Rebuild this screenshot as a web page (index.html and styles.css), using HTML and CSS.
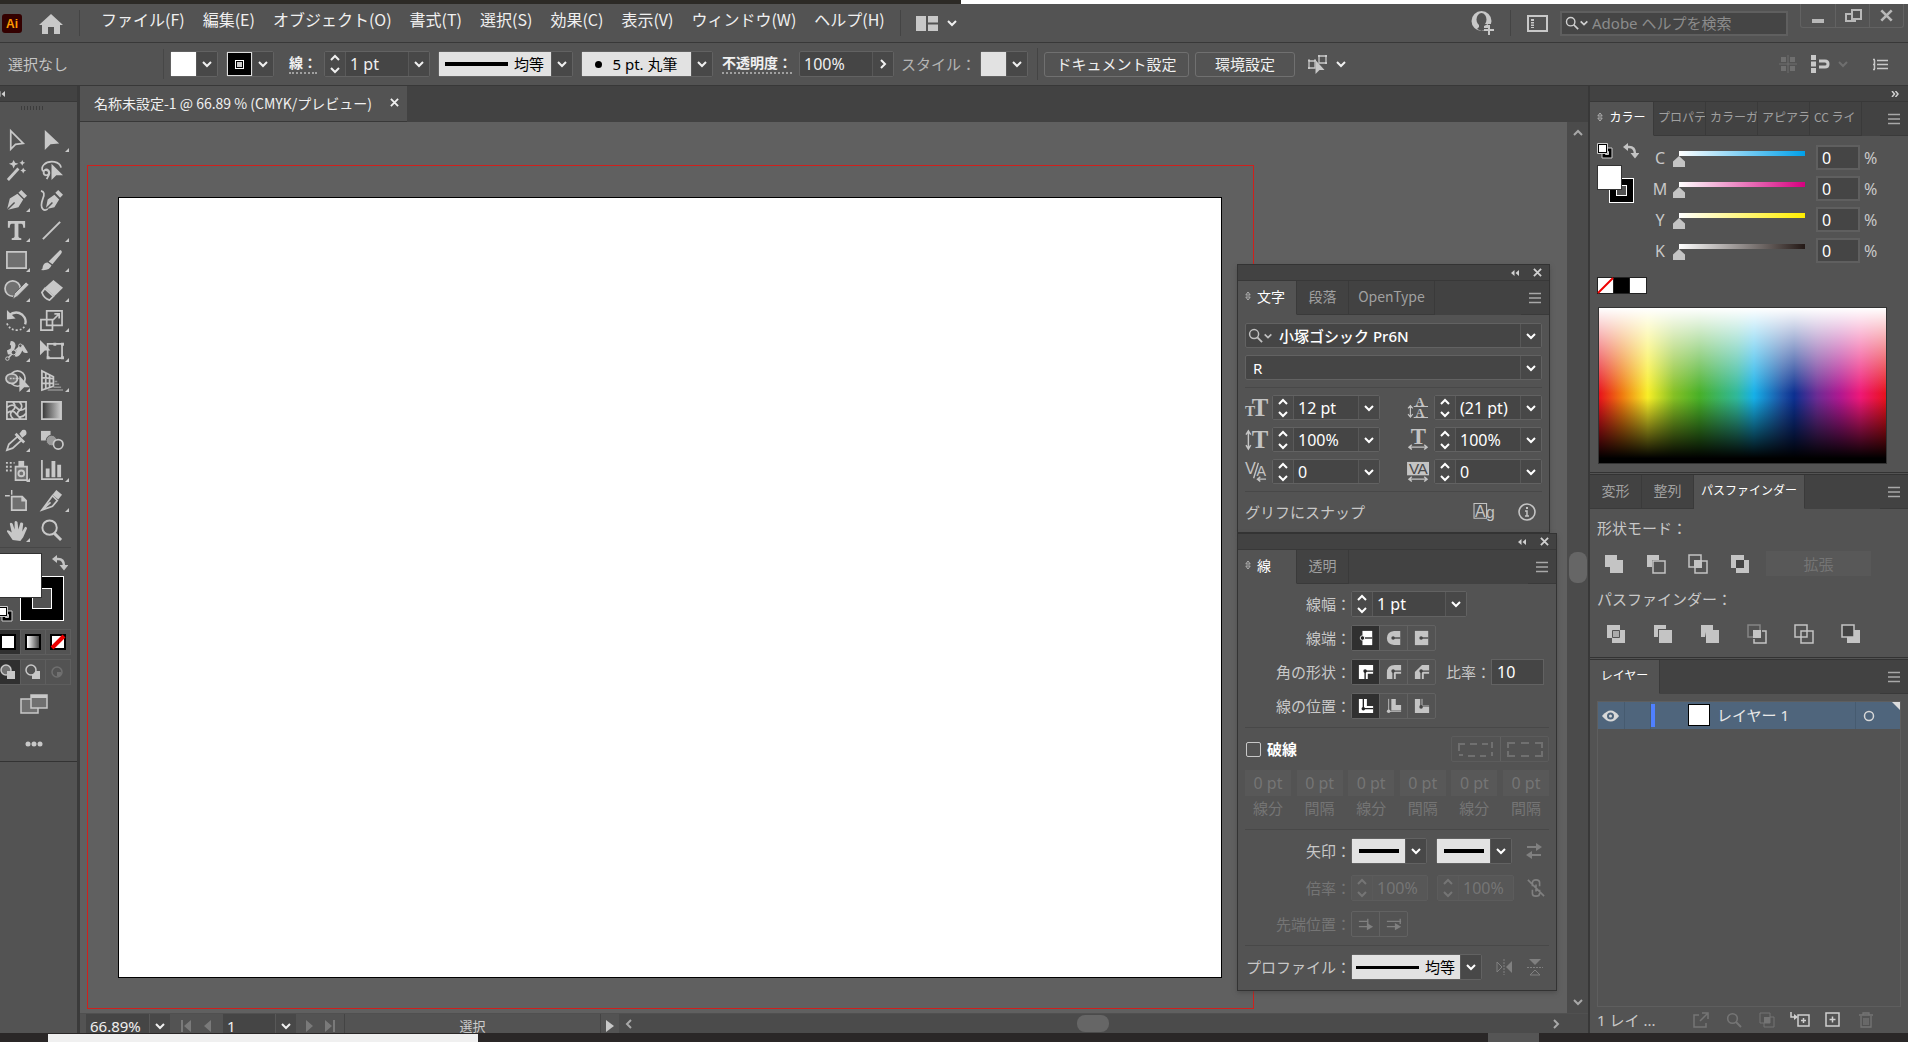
FILE: index.html
```html
<!DOCTYPE html>
<html lang="ja">
<head>
<meta charset="utf-8">
<title>名称未設定-1</title>
<link rel="stylesheet" href="styles.css">
</head>
<body>
<svg class="defs" aria-hidden="true">
  <symbol id="down" viewBox="0 0 12 12"><path d="M2 4l4 4 4-4" fill="none" stroke="currentColor" stroke-width="2"/></symbol>
  <symbol id="right" viewBox="0 0 12 12"><path d="M4 2l4 4-4 4" fill="none" stroke="currentColor" stroke-width="2"/></symbol>
  <symbol id="left" viewBox="0 0 12 12"><path d="M8 2L4 6l4 4" fill="none" stroke="currentColor" stroke-width="2"/></symbol>
  <symbol id="up" viewBox="0 0 12 12"><path d="M2 8l4-4 4 4" fill="none" stroke="currentColor" stroke-width="2"/></symbol>
  <symbol id="step" viewBox="0 0 12 20"><path d="M2 6l4-4 4 4M2 14l4 4 4-4" fill="none" stroke="currentColor" stroke-width="2"/></symbol>
  <symbol id="menu" viewBox="0 0 12 12"><path d="M0 1.5h12M0 6h12M0 10.5h12" stroke="currentColor" stroke-width="1.4"/></symbol>
  <symbol id="updown" viewBox="0 0 6 10"><path d="M.8 4L3 1l2.200 3zM.8 6L3 9l2.200-3z" fill="none" stroke="currentColor"/></symbol>
  <symbol id="x" viewBox="0 0 10 10"><path d="M1 1l8 8M9 1L1 9" stroke="currentColor" stroke-width="2"/></symbol>
  <symbol id="dblleft" viewBox="0 0 8 6"><path d="M3.500 0v6L0 3zM8 0v6L4.500 3z" fill="currentColor"/></symbol>
  <symbol id="dblright" viewBox="0 0 8 6"><path d="M1 0l2.500 3L1 6M4.500 0L7 3 4.500 6" fill="none" stroke="currentColor" stroke-width="1.500"/></symbol>
  <symbol id="swap" viewBox="0 0 16 16"><path d="M4 4h2q6 0 6 7" fill="none" stroke="currentColor" stroke-width="2.500"/><path d="M0 4l5-4v8zM7.500 10h9L12 15.500z" fill="currentColor"/></symbol>
  <symbol id="default" viewBox="0 0 16 16"><path d="M5 5h10v10H5z" fill="#000" stroke="#ccc"/><path d="M8.500 8.500h3v3h-3z" fill="#535353" stroke="#ccc"/><path d="M.5 .5h10v10H.5z" fill="#000" stroke="#ccc"/><path d="M2 2h7v7H2z" fill="#fff"/></symbol>
  <symbol id="search" viewBox="0 0 16 16"><circle cx="6.500" cy="6.500" r="4.800" fill="none" stroke="currentColor" stroke-width="1.600"/><path d="M10 10l5 5" stroke="currentColor" stroke-width="2"/></symbol>
</svg>

<div class="desktop-top"><span class="dark"></span><span class="white"></span></div>

<header class="menubar">
  <svg class="logo" viewBox="0 0 20 19"><rect width="20" height="19" rx="3" fill="#330000"/><text x="10" y="14" text-anchor="middle">Ai</text></svg>
  <button class="home" aria-label="ホーム"><svg width="24" height="20" viewBox="0 0 24 20"><path d="M12 0l12 11h-3v9h-6v-7H9v7H3v-9H0z" fill="#c8c8c8"/></svg></button>
  <i class="vsep"></i>
  <nav class="menus">
    <button>ファイル(F)</button><button>編集(E)</button><button>オブジェクト(O)</button><button>書式(T)</button><button>選択(S)</button><button>効果(C)</button><button>表示(V)</button><button>ウィンドウ(W)</button><button>ヘルプ(H)</button>
  </nav>
  <i class="vsep"></i>
  <button class="workspace" aria-label="ワークスペース"><svg width="22" height="15" viewBox="0 0 22 15" fill="#c8c8c8"><path d="M0 0h10v15H0zM12 0h10v6.500H12zM12 8.500h10V15H12z"/></svg><svg width="12" height="12"><use href="#down"/></svg></button>
  <span class="grow"></span>
  <button aria-label="アカウント"><svg width="24" height="26" viewBox="0 0 24 26"><circle cx="10.500" cy="11" r="10" fill="#c8c8c8"/><ellipse cx="10.500" cy="9.500" rx="5" ry="6.500" fill="#535353"/><path d="M8 13h5v4l2 2-4.500 2L6 19l2-2z" fill="#535353"/><path d="M13 14h11v12H13z" fill="#535353"/><path d="M13 16l4-2v4h-4z" fill="#c8c8c8"/><path d="M18 15v10M13 20h10" stroke="#c8c8c8" stroke-width="2"/></svg></button>
  <i class="vsep tight"></i>
  <button aria-label="パネル"><svg width="21" height="17" viewBox="0 0 21 17"><path d="M1 1h19v15H1z" fill="none" stroke="#c8c8c8" stroke-width="2"/><path d="M4 4h3v9H4z" fill="#c8c8c8"/><path d="M4 6.500h3M4 9h3M4 11.500h3" stroke="#535353"/></svg></button>
  <label class="help"><svg width="14" height="14"><use href="#search"/></svg><svg width="10" height="10"><use href="#down"/></svg><input type="text" placeholder="Adobe ヘルプを検索" aria-label="Adobe ヘルプを検索"></label>
  <div class="winbtns">
    <button aria-label="最小化"><svg width="16" height="18"><path d="M2 12h12v4H2z" fill="#b8b8b8"/></svg></button>
    <button aria-label="元に戻す"><svg width="18" height="18" fill="none" stroke="#b8b8b8" stroke-width="2"><path d="M8 3h9v9H8zM8 7H2v7h9v-2"/></svg></button>
    <button aria-label="閉じる"><svg width="13" height="13"><use href="#x"/></svg></button>
  </div>
</header>

<div class="control">
  <span class="state">選択なし</span>
  <div class="combo"><span class="chip white"></span><button class="caret" aria-label="塗り"><svg><use href="#down"/></svg></button></div>
  <div class="combo"><span class="chip strokechip"><i></i></span><button class="caret" aria-label="線のカラー"><svg><use href="#down"/></svg></button></div>
  <label class="dotted" for="sw">線：</label>
  <div class="combo"><button class="stepper" aria-label="増減"><svg><use href="#step"/></svg></button><input id="sw" class="w62" value="1 pt"><button class="caret" aria-label="線幅"><svg><use href="#down"/></svg></button></div>
  <div class="combo"><span class="light w112"><i class="rule w63"></i><select aria-label="可変線幅プロファイル"><option>均等</option></select></span><span class="caret"><svg><use href="#down"/></svg></span></div>
  <div class="combo brush"><span class="light w109"><i class="dot"></i><select aria-label="ブラシ定義"><option>5 pt. 丸筆</option></select></span><span class="caret"><svg><use href="#down"/></svg></span></div>
  <label class="dotted" for="op">不透明度：</label>
  <div class="combo"><input id="op" class="w72" value="100%"><button class="caret" aria-label="不透明度"><svg><use href="#right"/></svg></button></div>
  <span class="style-label">スタイル：</span>
  <div class="combo"><span class="chip"></span><button class="caret" aria-label="スタイル"><svg><use href="#down"/></svg></button></div>
  <i class="vsep"></i>
  <button class="outlined doc">ドキュメント設定</button>
  <button class="outlined pref">環境設定</button>
  <button class="similar" aria-label="類似オブジェクトを選択"><svg width="22" height="22" viewBox="0 0 22 22"><path d="M2 8h6v7H2zM12 3h7v7h-7z" fill="none" stroke="#c8c8c8" stroke-width="1.300"/><path d="M1 6.500h2v2H1zM7 6.500h2v2H7zM1 14h2v2H1zM11 2h2v2h-2zM18 2h2v2h-2zM18 9h2v2h-2z" fill="#c8c8c8"/><path d="M8.500 7v14l4-4h5z" fill="#c8c8c8"/></svg><svg width="12" height="12"><use href="#down"/></svg></button>
  <span class="grow"></span>
  <button class="faint" aria-label="グリッド"><svg width="18" height="18"><path d="M2 2h5v5H2zM11 2h5v5h-5zM2 11h5v5H2zM11 11h5v5h-5z" fill="currentColor"/><path d="M9 0v18M0 9h18" stroke="currentColor"/></svg></button>
  <button class="snap" aria-label="スナップ"><svg width="20" height="20"><path d="M0 1h5v5H0zM0 7.500h5v5H0zM0 14h5v5H0z" fill="#c8c8c8"/><path d="M8 7h6q3 0 3 3t-3 3H8" fill="none" stroke="#c8c8c8" stroke-width="3"/></svg><svg class="faint" width="12" height="12"><use href="#down"/></svg></button>
  <button aria-label="コントロールメニュー"><svg width="15" height="13"><path d="M0 1.500h2M0 6.500h2M0 11.500h2M4 2.500h11M4 6.500h11M4 10.500h11M1.500 2v9" stroke="#c8c8c8" stroke-width="1.500"/></svg></button>
</div>

<main class="work">
  <aside class="toolbox">
    <div class="bar"><svg width="8" height="6"><use href="#dblleft"/></svg></div>
    <div class="grip"></div>
    <div class="tools">
      <button aria-label="選択"><svg viewBox="0 0 24 24"><path d="M6 2v19l5-5 8-1z" class="ln"/></svg></button>
      <button class="more" aria-label="ダイレクト選択"><svg viewBox="0 0 24 24"><path d="M5 1v21l6-6 9-1z"/></svg></button>
      <button aria-label="自動選択"><svg viewBox="0 0 24 24"><path d="M3 22L14 10" stroke="#c8c8c8" stroke-width="3"/><path d="M9 1l1.500 3L14 5l-3.500 1.500L9 10 7.500 6.500 4 5l3.500-1zM18 1l1 2 2 1-2 1-1 2-1-2-2-1 2-1zM19 9l1 2 2 1-2 1-1 2-1-2-2-1 2-1z"/></svg></button>
      <button aria-label="なげなわ"><svg viewBox="0 0 24 24"><path d="M3 13Q1 9 4 6q4-4 11-3 6 1 7 6M3 13q3-3 6 0 1 4-3 4-3-1-2-4 2-4 5-1 2 3-1 7l-1 2" class="ln"/><path d="M12 5v17l5-5h7z"/></svg></button>
      <button class="more" aria-label="ペン"><svg viewBox="0 0 24 24"><path d="M2 22l3-12 8-5 6 6-5 8zM14 4l3-3 6 6-3 3z"/><path d="M2 22l8-8" stroke="#535353" stroke-width="1.500"/></svg></button>
      <button aria-label="曲線"><svg viewBox="0 0 24 24"><path d="M6 21l2-10 7-5 5 5-5 8zM16 4l3-3 5 5-3 3z"/><path d="M6 21l7-7" stroke="#535353" stroke-width="1.500"/><path d="M1 2q5 1 2 8-3 8 0 11 2 2 5 0" class="ln"/></svg></button>
      <button class="more" aria-label="文字"><svg viewBox="0 0 24 24"><path d="M3 2h18v7h-2q0-4-2-4h-3v13q0 2 3 2v2H7v-2q3 0 3-2V5H7Q5 5 5 9H3z"/></svg></button>
      <button class="more" aria-label="直線"><svg viewBox="0 0 24 24"><path d="M3 21L21 3" stroke="#c8c8c8" stroke-width="2"/></svg></button>
      <button class="more" aria-label="長方形"><svg viewBox="0 0 24 24"><path d="M2 3h20v17H2z" fill="#707070" stroke="#c8c8c8" stroke-width="1.800"/></svg></button>
      <button class="more" aria-label="ブラシ"><svg viewBox="0 0 24 24"><path d="M21 1q3 1 1 4l-9 11-4-3zM8 14l4 3q-2 6-11 5 2-1 2-4 1-4 5-4z"/></svg></button>
      <button class="more" aria-label="Shaper"><svg viewBox="0 0 24 24"><circle cx="8" cy="10" r="8" fill="#707070" stroke="#c8c8c8" stroke-width="1.800"/><path d="M22 3l3 3-12 12-5 3 2-6z" stroke="#535353" stroke-width=".8"/></svg></button>
      <button class="more" aria-label="消しゴム"><svg viewBox="0 0 24 24"><path d="M14 1l10 8-9 9-10-9z"/><path d="M5 10l9 8-4 4q-6-2-8-8z" class="ln"/></svg></button>
      <button class="more" aria-label="回転"><svg viewBox="0 0 24 24"><path d="M4 7q7-6 14-1 5 5 3 10" fill="none" stroke="#c8c8c8" stroke-width="2.500"/><path d="M2 1v10l9-1z"/><path d="M2 15q3 7 10 7t9-5" class="ln" stroke-dasharray="2 2"/></svg></button>
      <button class="more" aria-label="拡大・縮小"><svg viewBox="0 0 24 24"><path d="M7 2h16v15H7zM1 11h12v11H1zM13 12l6-6M15 5h5v5" class="ln"/></svg></button>
      <button class="more" aria-label="線幅"><svg viewBox="0 0 24 24"><path d="M6 2q5 0 5 5l-2 6q-2 4-6 3l-1-4 4-2q1-4-1-4zM12 12q3-7 7-6l5 8q-4 2-6-2-3 8-8 6z"/><path d="M2 21L16 7" stroke="#c8c8c8" stroke-width="1.500"/><circle cx="2.500" cy="20.500" r="1.800" fill="#535353" stroke="#c8c8c8"/><circle cx="9" cy="14" r="2.500" fill="#535353" stroke="#c8c8c8"/><circle cx="16" cy="7" r="1.800" fill="#535353" stroke="#c8c8c8"/></svg></button>
      <button class="more" aria-label="自由変形"><svg viewBox="0 0 24 24"><path d="M8 5h15v15H8z" class="ln"/><path d="M0 1v16l5-5h6z"/><path d="M14 4h3v3h-3zM22 4h3v3h-3zM22 18h3v3h-3zM7 18h3v3H7z"/></svg></button>
      <button class="more" aria-label="シェイプ形成"><svg viewBox="0 0 24 24"><circle cx="13" cy="10" r="8" class="ln"/><ellipse cx="7" cy="10" rx="6" ry="5" fill="#707070" stroke="#c8c8c8" stroke-width="1.800"/><path d="M5 10h10" stroke="#c8c8c8" stroke-width="1.500" stroke-dasharray="2 1"/><path d="M15 7v17l5-5h6z"/></svg></button>
      <button class="more" aria-label="遠近グリッド"><svg viewBox="0 0 24 24"><path d="M2 2v20l12-4V8zM6 4v16M10 6v13M2 9l12 1M2 15h12" class="ln"/><path d="M15 13h3M15 16h5M14 19h8M8 22h16" stroke="#909090" stroke-width="1.500"/></svg></button>
      <button aria-label="メッシュ"><svg viewBox="0 0 24 24"><path d="M2 3h20v18H2zM2 9q6-5 10 0t10 0M2 15q6-5 10 1t10-1M8 3q5 5 0 9t1 9M15 3q5 5 0 9t2 9" class="ln"/></svg></button>
      <button aria-label="グラデーション"><svg viewBox="0 0 24 24"><defs><linearGradient id="g1"><stop stop-color="#333"/><stop offset="1" stop-color="#ccc"/></linearGradient></defs><path d="M2 3h20v18H2z" fill="url(#g1)" stroke="#c8c8c8" stroke-width="1.800"/></svg></button>
      <button class="more" aria-label="スポイト"><svg viewBox="0 0 24 24"><path d="M13 8l4 4-9 8-6 2 2-6z" class="ln"/><path d="M12 4l9 9-2 2-9-9zM15 5l3-4q3-1 4 1t0 4l-4 3z"/></svg></button>
      <button aria-label="ブレンド"><svg viewBox="0 0 24 24"><path d="M1 2h10v10H1z"/><circle cx="12" cy="12" r="5.500" fill="#999" stroke="#535353"/><circle cx="19" cy="16" r="5" fill="#535353" stroke="#c8c8c8" stroke-width="1.800"/></svg></button>
      <button class="more" aria-label="シンボルスプレー"><svg viewBox="0 0 24 24"><path d="M11 8h12v14H11z" fill="#707070" stroke="#c8c8c8" stroke-width="1.800"/><path d="M14 2h6v6h-6z"/><circle cx="17" cy="15" r="3" fill="none" stroke="#c8c8c8" stroke-width="2"/><path d="M1 4h9M1 8h8M1 12h6" stroke="#c8c8c8" stroke-width="2" stroke-dasharray="2 2"/></svg></button>
      <button class="more" aria-label="グラフ"><svg viewBox="0 0 24 24"><path d="M2 1v20h22" class="ln"/><path d="M6 10h4v9H6zM12 2h4v17h-4zM18 6h4v13h-4z"/></svg></button>
      <button aria-label="アートボード"><svg viewBox="0 0 24 24"><path d="M7 8h11l4 4v10H7z" fill="#707070" stroke="#c8c8c8" stroke-width="1.800"/><path d="M17 7v6h6" fill="#c8c8c8"/><path d="M7 1v5M0 7h5" stroke="#c8c8c8" stroke-width="1.500"/></svg></button>
      <button class="more" aria-label="スライス"><svg viewBox="0 0 24 24"><path d="M2 22L13 7l5 5-5 6zM2 22l9-8" class="ln"/><path d="M13 6l4-5 6 5-4 5z"/></svg></button>
      <button class="more" aria-label="手のひら"><svg viewBox="0 0 24 24"><path d="M8 22L2 13q0-3 5 1L5 5q1-2 3 0l2 6V3q1-2 3 0l1 8 2-7q2-1 3 1l-1 8 3-5q2 0 2 2l-4 9-3 4z"/></svg></button>
      <button aria-label="ズーム"><svg viewBox="0 0 24 24"><circle cx="10" cy="9" r="7.500" fill="none" stroke="#c8c8c8" stroke-width="2"/><path d="M15 15l7 7" stroke="#c8c8c8" stroke-width="3"/></svg></button>
    </div>
    <div class="fillstroke">
      <span class="stroke"></span><span class="fill"></span>
      <svg class="swapicon" width="16" height="16"><use href="#swap"/></svg>
      <svg class="defaulticon" width="16" height="16"><use href="#default"/></svg>
    </div>
    <div class="modes">
      <button class="on" aria-label="カラー"><span class="msw solid"></span></button>
      <button aria-label="グラデーション"><span class="msw grad"></span></button>
      <button aria-label="なし"><svg width="16" height="16"><path d="M0 0h16v16H0z"/><path d="M2 2h12v12H2z" fill="#fff"/><path d="M2 14L14 2" stroke="#e00" stroke-width="4"/></svg></button>
    </div>
    <div class="modes">
      <button class="on" aria-label="標準描画"><svg width="16" height="16"><circle cx="6" cy="6" r="5" fill="#707070" stroke="#c8c8c8" stroke-width="1.500"/><path d="M7 7h8v8H7z" fill="#c8c8c8"/></svg></button>
      <button aria-label="背面描画"><svg width="16" height="16"><path d="M7 7h8v8H7z" fill="#c8c8c8"/><circle cx="6" cy="6" r="5" fill="#535353" stroke="#c8c8c8" stroke-width="1.500"/></svg></button>
      <button aria-label="内側描画"><svg width="16" height="16"><circle cx="7" cy="8" r="5" fill="none" stroke="#707070" stroke-width="1.500"/><path d="M7 8h4v4H7z" fill="#707070"/></svg></button>
    </div>
    <button class="screen" aria-label="スクリーンモード"><svg width="28" height="20"><path d="M1 5h17v14H1z" fill="#707070" stroke="#c8c8c8" stroke-width="1.500"/><path d="M11 1h16v13H11z" fill="#707070" stroke="#c8c8c8" stroke-width="1.500"/><path d="M11 1h16v3H11z" fill="#c8c8c8"/></svg></button>
    <button class="dots" aria-label="ツールバーを編集"><svg width="18" height="6" fill="#c8c8c8"><circle cx="3" cy="3" r="2.500"/><circle cx="9" cy="3" r="2.500"/><circle cx="15" cy="3" r="2.500"/></svg></button>
  </aside>

  <section class="document">
    <div class="doctabs"><div class="doctab"><span>名称未設定-1 @ 66.89 % (CMYK/プレビュー)</span><button aria-label="閉じる"><svg width="9" height="9"><use href="#x"/></svg></button></div></div>
    <div class="stage">
      <div class="canvas">
        <div class="bleed"></div>
        <div class="artboard"></div>

        <section class="float chars">
          <div class="bar"><svg width="8" height="6"><use href="#dblleft"/></svg><button aria-label="閉じる"><svg width="9" height="9"><use href="#x"/></svg></button></div>
          <div class="tabs"><button class="tab on"><svg width="6" height="10"><use href="#updown"/></svg>文字</button><button class="tab">段落</button><button class="tab">OpenType</button><button class="burger" aria-label="メニュー"><svg width="12" height="12"><use href="#menu"/></svg></button></div>
          <div class="cbody">
            <div class="combo wide"><label class="fontbox"><svg width="15" height="15"><use href="#search"/></svg><svg width="10" height="10"><use href="#down"/></svg><input value="小塚ゴシック Pr6N" aria-label="フォント"></label><button class="caret" aria-label="フォント一覧"><svg><use href="#down"/></svg></button></div>
            <div class="combo wide"><select class="styleselect" aria-label="スタイル"><option>R</option></select><span class="caret"><svg><use href="#down"/></svg></span></div>
            <hr>
            <div class="pairs">
              <div class="field"><svg class="fi" viewBox="0 0 24 22"><text x="7" y="20" font-size="26">T</text><text x="0" y="20" font-size="16">T</text></svg><div class="combo"><button class="stepper" aria-label="増減"><svg><use href="#step"/></svg></button><input value="12 pt" aria-label="フォントサイズ"><button class="caret" aria-label="一覧"><svg><use href="#down"/></svg></button></div></div>
              <div class="field"><svg class="fi" viewBox="0 0 24 22"><text x="9" y="9" font-size="13">A</text><text x="9" y="21" font-size="13">A</text><path d="M7 10h15M7 21.500h15M3.500 9v12M1 12l2.500-3L6 12M1 18l2.500 3L6 18" fill="none" stroke="#c4c4c4" stroke-width="1.200"/></svg><div class="combo"><button class="stepper" aria-label="増減"><svg><use href="#step"/></svg></button><input value="(21 pt)" aria-label="行送り"><button class="caret" aria-label="一覧"><svg><use href="#down"/></svg></button></div></div>
              <div class="field"><svg class="fi" viewBox="0 0 24 22"><text x="7" y="20" font-size="26">T</text><path d="M3.500 3v17M1 6l2.500-4L6 6M1 17l2.500 4L6 17" fill="none" stroke="#c4c4c4" stroke-width="1.500"/></svg><div class="combo"><button class="stepper" aria-label="増減"><svg><use href="#step"/></svg></button><input value="100%" aria-label="垂直比率"><button class="caret" aria-label="一覧"><svg><use href="#down"/></svg></button></div></div>
              <div class="field"><svg class="fi" viewBox="0 0 24 22"><text x="4" y="16" font-size="24">T</text><path d="M2 19h19M5 16.500L2 19l3 2.500M18 16.500l3 2.500-3 2.500" fill="none" stroke="#c4c4c4" stroke-width="1.500"/></svg><div class="combo"><button class="stepper" aria-label="増減"><svg><use href="#step"/></svg></button><input value="100%" aria-label="水平比率"><button class="caret" aria-label="一覧"><svg><use href="#down"/></svg></button></div></div>
              <div class="field"><svg class="fi sans" viewBox="0 0 24 22"><text x="0" y="14" font-size="17">V</text><text x="12" y="16" font-size="15">A</text><path d="M9 18L14 2M13 19h9M16 16.500L13 19l3 2.500" fill="none" stroke="#c4c4c4" stroke-width="1.500"/></svg><div class="combo"><button class="stepper" aria-label="増減"><svg><use href="#step"/></svg></button><input value="0" aria-label="カーニング"><button class="caret" aria-label="一覧"><svg><use href="#down"/></svg></button></div></div>
              <div class="field"><svg class="fi sans" viewBox="0 0 24 22"><path d="M0 1h23v14H0z" fill="#c4c4c4"/><text class="inv" x="2" y="14" font-size="16">V</text><text class="inv" x="11" y="14" font-size="16">A</text><path d="M2 19h19M5 16.500L2 19l3 2.500M18 16.500l3 2.500-3 2.500" fill="none" stroke="#c4c4c4" stroke-width="1.500"/></svg><div class="combo"><button class="stepper" aria-label="増減"><svg><use href="#step"/></svg></button><input value="0" aria-label="トラッキング"><button class="caret" aria-label="一覧"><svg><use href="#down"/></svg></button></div></div>
            </div>
            <hr>
            <div class="snaprow"><span>グリフにスナップ</span><button aria-label="グリフ"><svg class="sans fi" viewBox="0 0 21 20"><path d="M.5 1.500h12v14H.5z" fill="none" stroke="#c4c4c4"/><text x="1.500" y="14" font-size="15">A</text><text x="12" y="15" font-size="15">g</text></svg></button><button aria-label="情報"><svg width="18" height="18"><circle cx="9" cy="9" r="8" fill="none" stroke="#c4c4c4" stroke-width="1.600"/><path d="M8 4h2v2H8z" fill="#c4c4c4"/><path d="M7 8h2v5M7 13h4" fill="none" stroke="#c4c4c4" stroke-width="1.500"/></svg></button></div>
          </div>
        </section>

        <section class="float strokes">
          <div class="bar"><svg width="8" height="6"><use href="#dblleft"/></svg><button aria-label="閉じる"><svg width="9" height="9"><use href="#x"/></svg></button></div>
          <div class="tabs"><button class="tab on"><svg width="6" height="10"><use href="#updown"/></svg>線</button><button class="tab">透明</button><button class="burger" aria-label="メニュー"><svg width="12" height="12"><use href="#menu"/></svg></button></div>
          <div class="sbody">
            <div class="row"><label for="wgt">線幅：</label><div class="combo"><button class="stepper" aria-label="増減"><svg><use href="#step"/></svg></button><input id="wgt" class="w72" value="1 pt"><button class="caret" aria-label="一覧"><svg><use href="#down"/></svg></button></div></div>
            <div class="row"><label>線端：</label><div class="seg">
              <button class="on" aria-label="バット"><svg viewBox="0 0 18 18"><path d="M5 1h11v16H5z" fill="#fff"/><path d="M3 9h13" stroke="#222" stroke-width="1.500"/><circle cx="5" cy="9" r="2.500" fill="#222" stroke="#fff"/></svg></button>
              <button aria-label="丸型"><svg viewBox="0 0 18 18"><path d="M9 1h7v16H9Q1 16 1 9t8-8z"/><path d="M7 9h9" stroke="#444" stroke-width="1.500"/><circle cx="8" cy="9" r="2" fill="#444"/></svg></button>
              <button aria-label="突出"><svg viewBox="0 0 18 18"><path d="M1 1h15v16H1z"/><path d="M7 9h9" stroke="#444" stroke-width="1.500"/><circle cx="8" cy="9" r="2" fill="#444"/></svg></button></div></div>
            <div class="row"><label>角の形状：</label><div class="seg">
              <button class="on" aria-label="マイター"><svg viewBox="0 0 18 18"><path d="M1 1h16v10h-6v6H1z" fill="#fff"/><path d="M17 8H8v9" fill="none" stroke="#222" stroke-width="1.500"/><circle cx="8" cy="8" r="2" fill="#222"/></svg></button>
              <button aria-label="ラウンド"><svg viewBox="0 0 18 18"><path d="M1 17v-7q0-9 9-9h7v10h-6v6z"/><path d="M17 8H8v9" fill="none" stroke="#444" stroke-width="1.500"/><circle cx="8" cy="8" r="2" fill="#444"/></svg></button>
              <button aria-label="ベベル"><svg viewBox="0 0 18 18"><path d="M1 17V9l8-8h8v10h-6v6z"/><path d="M17 8H8v9" fill="none" stroke="#444" stroke-width="1.500"/><circle cx="8" cy="8" r="2" fill="#444"/></svg></button></div>
              <label class="ratio" for="miter">比率：</label><input id="miter" class="box" value="10"></div>
            <div class="row"><label>線の位置：</label><div class="seg">
              <button class="on" aria-label="中央"><svg viewBox="0 0 18 18"><path d="M1 1h9v8h7v8H1z" fill="#fff"/><path d="M6 1v11h11" fill="none" stroke="#222" stroke-width="1.500"/><circle cx="6" cy="12" r="2" fill="#222"/></svg></button>
              <button aria-label="内側"><svg viewBox="0 0 18 18"><path d="M6 1h5v7h6v6H6z"/><path d="M3 1v14h14" fill="none" stroke="#c4c4c4"/><circle cx="3" cy="15" r="2"/></svg></button>
              <button aria-label="外側"><svg viewBox="0 0 18 18"><path d="M1 1h6v9h10v7H1z"/><path d="M9 1v8h8" fill="none" stroke="#c4c4c4"/><circle cx="8" cy="10" r="2" fill="#444"/></svg></button></div></div>
            <hr>
            <div class="dash"><label><input type="checkbox">破線</label><div class="seg dim wide">
              <button disabled aria-label="正確な破線"><svg viewBox="0 0 36 16"><path d="M1 10V3h6M12 3h7M24 3h6M34 1v6M1 14h4M10 15h7M22 15h6M34 11v4" fill="none" stroke="#707070" stroke-width="2"/></svg></button>
              <button disabled aria-label="整列した破線"><svg viewBox="0 0 36 16"><path d="M8 2H1v5M14 2h8M28 2h7v5M1 10v5h7M14 15h8M28 15h7v-5" fill="none" stroke="#707070" stroke-width="2"/></svg></button></div></div>
            <div class="dashes">
              <label><input disabled value="0 pt">線分</label><label><input disabled value="0 pt">間隔</label><label><input disabled value="0 pt">線分</label><label><input disabled value="0 pt">間隔</label><label><input disabled value="0 pt">線分</label><label><input disabled value="0 pt">間隔</label>
            </div>
            <hr>
            <div class="row"><label>矢印：</label><div class="combo"><span class="light w53"><i class="rule w40"></i></span><button class="caret" aria-label="始点の矢印"><svg><use href="#down"/></svg></button></div><div class="combo second"><span class="light w53"><i class="rule w40"></i></span><button class="caret" aria-label="終点の矢印"><svg><use href="#down"/></svg></button></div><svg class="tail" viewBox="0 0 18 16"><path d="M2 4h9M7 12h9" stroke="#808080" stroke-width="2"/><path d="M11 0l6 4-6 4zM7 8l-6 4 6 4z" fill="#808080"/></svg></div>
            <div class="row dim"><label for="sc">倍率：</label><div class="combo"><button class="stepper" disabled aria-label="増減"><svg><use href="#step"/></svg></button><input id="sc" class="w54" disabled value="100%"></div><div class="combo second"><button class="stepper" disabled aria-label="増減"><svg><use href="#step"/></svg></button><input class="w54" disabled value="100%" aria-label="終点の倍率"></div><svg class="tail" viewBox="0 0 18 20"><path d="M5 8V4q0-3 4-3t4 3v4M5 12v4q0 3 4 3t4-3v-4M9 6v8M0 1l18 18" fill="none" stroke="#808080" stroke-width="1.800"/></svg></div>
            <div class="row dim"><label>先端位置：</label><div class="seg">
              <button disabled aria-label="先端を超える"><svg viewBox="0 0 18 16"><path d="M1 5h10M1 11h10M11 2v6" stroke="#808080" stroke-width="1.500"/><path d="M10 7l7 4-7 4z" fill="#808080"/></svg></button>
              <button disabled aria-label="先端に配置"><svg viewBox="0 0 18 16"><path d="M1 5h16M1 11h10M16 2v6" stroke="#808080" stroke-width="1.500"/><path d="M10 7l7 4-7 4z" fill="#808080"/></svg></button></div></div>
            <hr>
            <div class="row"><label>プロファイル：</label><div class="combo"><span class="light w108"><i class="rule thin w63"></i><select aria-label="プロファイル"><option>均等</option></select></span><span class="caret"><svg><use href="#down"/></svg></span></div><svg class="tail near" viewBox="0 0 18 16"><path d="M2 3v10l5-5z" fill="none" stroke="#808080"/><path d="M17 2v12l-6-6z" fill="#808080"/><path d="M9 0v16" stroke="#808080" stroke-dasharray="2 1"/></svg><svg class="tail near" viewBox="0 0 18 16"><path d="M3 0h12l-6 6z" fill="#808080"/><path d="M4 16h10l-5-5z" fill="none" stroke="#808080"/><path d="M1 8.500h16" stroke="#808080" stroke-dasharray="2 1"/></svg></div>
          </div>
        </section>
      </div>
      <div class="vscroll"><svg width="12" height="12"><use href="#up"/></svg><i></i><svg width="12" height="12"><use href="#down"/></svg></div>
    </div>
    <div class="status">
      <input class="w63" value="66.89%" aria-label="ズーム"><button class="caret" aria-label="ズーム一覧"><svg><use href="#down"/></svg></button>
      <button class="nav" aria-label="前へ"><svg width="40" height="12" fill="#7a7a7a"><path d="M4 0h2v12H4zM14 0v12L7 6zM34 0v12l-7-6z"/></svg></button>
      <input class="w52" value="1" aria-label="アートボード"><button class="caret" aria-label="アートボード一覧"><svg><use href="#down"/></svg></button>
      <button class="nav" aria-label="次へ"><svg width="40" height="12" fill="#7a7a7a"><path d="M6 0v12l7-6zM25 0v12l7-6zM33 0h2v12h-2z"/></svg></button>
      <span class="tool">選択</span>
      <button class="play" aria-label="表示"><svg width="8" height="12" fill="#c8c8c8"><path d="M0 0l8 6-8 6z"/></svg></button>
      <div class="hscroll"><svg width="12" height="12"><use href="#left"/></svg><i></i><svg width="12" height="12"><use href="#right"/></svg></div>
    </div>
  </section>

  <aside class="dock">
    <div class="bar"><svg width="8" height="6"><use href="#dblright"/></svg></div>
    <section class="colour">
      <div class="tabs kana"><button class="tab on"><svg width="6" height="10"><use href="#updown"/></svg>カラー</button><button class="tab cut">プロパテ</button><button class="tab cut">カラーガ</button><button class="tab cut">アピアラ</button><button class="tab cut">CC ライ</button><button class="burger" aria-label="メニュー"><svg width="12" height="12"><use href="#menu"/></svg></button></div>
      <div class="mix">
        <div class="proxy"><div class="minis"><svg width="16" height="16"><use href="#default"/></svg><svg width="16" height="16"><use href="#swap"/></svg></div><div class="pair"><span class="stroke"></span><span class="fill"></span></div></div>
        <div class="sliders">
          <div class="ch"><label for="c">C</label><input id="c" class="c" type="range" value="0"><input value="0" aria-label="C 値"><span>%</span></div>
          <div class="ch"><label for="m">M</label><input id="m" class="m" type="range" value="0"><input value="0" aria-label="M 値"><span>%</span></div>
          <div class="ch"><label for="y">Y</label><input id="y" class="y" type="range" value="0"><input value="0" aria-label="Y 値"><span>%</span></div>
          <div class="ch"><label for="k">K</label><input id="k" class="k" type="range" value="0"><input value="0" aria-label="K 値"><span>%</span></div>
        </div>
      </div>
      <svg class="quick" width="50" height="17"><path d="M0 0h50v17H0z" fill="#222"/><path d="M1 1h15v15H1zM33 1h16v15H33z" fill="#fff"/><path d="M17 1h15v15H17z"/><path d="M1 16L16 1" stroke="#e00" stroke-width="2"/></svg>
      <div class="spectrum"></div>
    </section>
    <section class="path">
      <div class="tabs"><button class="tab">変形</button><button class="tab">整列</button><button class="tab on kana">パスファインダー</button><button class="burger" aria-label="メニュー"><svg width="12" height="12"><use href="#menu"/></svg></button></div>
      <div class="pbody">
        <h3>形状モード：</h3>
        <div class="shapes">
          <button aria-label="合体"><svg viewBox="0 0 20 20"><path d="M1 1h12v5h6v13H6v-6H1z"/></svg></button>
          <button aria-label="前面オブジェクトで型抜き"><svg viewBox="0 0 20 20"><path d="M1 1h12v5H6v7H1z"/><path d="M7 7h12v12H7z" fill="none" stroke="#c4c4c4" stroke-width="1.500"/></svg></button>
          <button aria-label="交差"><svg viewBox="0 0 20 20"><path d="M1 1h12v12H1zM7 7h12v12H7z" fill="none" stroke="#c4c4c4" stroke-width="1.500"/><path d="M6 6h8v8H6z"/></svg></button>
          <button aria-label="中マド"><svg viewBox="0 0 20 20"><path d="M1 1h13v5h5v13H6v-5H1z"/><path d="M6 6h8v8H6z" fill="#444"/></svg></button>
          <button class="expand" disabled>拡張</button>
        </div>
        <h3>パスファインダー：</h3>
        <div class="finders">
          <button aria-label="分割"><svg viewBox="0 0 20 20"><path d="M1 1h13v5h5v13H6v-5H1z"/><path d="M6.500 6.500h7v7h-7z" fill="#aaa" stroke="#535353"/></svg></button>
          <button aria-label="刈り込み"><svg viewBox="0 0 20 20"><path d="M1 1h12v4H5v8H1z"/><path d="M6 6h13v13H6z"/></svg></button>
          <button aria-label="合流"><svg viewBox="0 0 20 20"><path d="M1 1h12v5h6v13H6V8l-1 5H1z"/></svg></button>
          <button aria-label="切り抜き"><svg viewBox="0 0 20 20"><path d="M1 1h12v12H1z" fill="none" stroke="#858585" stroke-width="1.500"/><path d="M15 7h4v12H7v-4" fill="none" stroke="#c4c4c4" stroke-width="1.500"/><path d="M6 6h8v8H6z"/></svg></button>
          <button aria-label="アウトライン"><svg viewBox="0 0 20 20"><path d="M1 1h12v12H1zM7 7h12v12H7z" fill="none" stroke="#c4c4c4" stroke-width="1.500"/></svg></button>
          <button aria-label="背面オブジェクトで型抜き"><svg viewBox="0 0 20 20"><path d="M6 6h13v13H6z"/><path d="M1 1h12v12H1z" fill="#444" stroke="#c4c4c4" stroke-width="1.500"/></svg></button>
        </div>
      </div>
    </section>
    <section class="layers">
      <div class="tabs kana"><button class="tab on">レイヤー</button><button class="burger" aria-label="メニュー"><svg width="12" height="12"><use href="#menu"/></svg></button></div>
      <div class="list">
        <div class="layer">
          <button class="eye" aria-label="表示"><svg width="18" height="12"><path d="M0 6q9-11 17 0-8 11-17 0z" fill="#d8d8d8"/><circle cx="8.500" cy="6" r="3.500" fill="#4f657c"/><circle cx="8.500" cy="6" r="1.500" fill="#d8d8d8"/></svg></button>
          <span class="lock"></span><span class="tint"></span><span class="thumb"></span><span class="name">レイヤー 1</span>
          <button class="target" aria-label="ターゲット"><svg width="12" height="12"><circle cx="6" cy="6" r="4.500" fill="none" stroke="#d8d8d8" stroke-width="1.500"/></svg></button>
          <span class="corner"></span>
        </div>
      </div>
      <footer><span class="count">1 レイ ...</span>
        <button class="off" aria-label="書き出し"><svg viewBox="0 0 16 16"><path d="M6 3H1v12h12v-4M7 9l7-7M9 1h6v6" fill="none" stroke="currentColor" stroke-width="1.500"/></svg></button>
        <button class="off" aria-label="検索"><svg><use href="#search"/></svg></button>
        <button class="off" aria-label="マスク"><svg viewBox="0 0 16 16"><path d="M1 1h10v10H1zM11 5h4v10H5v-4" fill="none" stroke="currentColor"/><path d="M5 5h6v6H5z" fill="currentColor"/></svg></button>
        <button aria-label="サブレイヤー"><svg class="wide" viewBox="0 0 20 16"><path d="M8 3h11v11H8zM13.500 6v5M11 8.500h5M1 0v5h4" fill="none" stroke="currentColor" stroke-width="1.500"/><path d="M4 2l4 3-4 3z" fill="currentColor"/></svg></button>
        <button aria-label="新規レイヤー"><svg viewBox="0 0 16 16"><path d="M1 1h13v13H1zM7.500 4.500v6M4.500 7.500h6" fill="none" stroke="currentColor" stroke-width="1.500"/></svg></button>
        <button class="off" aria-label="削除"><svg viewBox="0 0 16 16"><path d="M1 3h14M5 3V1h6v2M3 4v11h10V4M6 6v7M8 6v7M10 6v7" fill="none" stroke="currentColor" stroke-width="1.300"/></svg></button>
      </footer>
    </section>
  </aside>
</main>
<div class="desktop-bottom"><span class="white"></span><span class="grey"></span></div>
</body>
</html>
```
FILE: styles.css
```css
:root {
  --bg: #535353;
  --dark: #424242;
  --field: #454545;
  --line: #383838;
  --edge: #626262;
  --icon: #c4c4c4;
  --text: #f0f0f0;
}
* { box-sizing: border-box; }
body {
  margin: 0;
  height: 100vh;
  overflow: hidden;
  display: flex;
  flex-direction: column;
  background: var(--bg);
  color: var(--text);
  font: 15px/20px "Noto Sans", "Noto Sans CJK JP", sans-serif;
}
button, input, select { font: inherit; color: inherit; border: 0; background: none; margin: 0; padding: 0; min-width: 0; border-radius: 0; outline: 0; }
button { display: flex; align-items: center; justify-content: center; white-space: nowrap; }
select { appearance: none; }
svg { display: block; flex: none; }
i { display: block; }
.defs { position: absolute; width: 0; height: 0; }
.grow { flex: 1; }

/* window surroundings */
.desktop-top { height: 4px; flex: none; display: flex; }
.desktop-top .dark { flex: 961; background: #2c2a26; }
.desktop-top .white { flex: 947; background: #fff; }
.desktop-bottom { height: 9px; flex: none; display: flex; background: #2a2727; padding-left: 48px; }
.desktop-bottom .white { width: 430px; background: #f0f0f0; margin-top: 1px; }
.desktop-bottom .grey { width: 51px; background: #555; margin-left: 1010px; }

/* menu bar */
.menubar { height: 39px; flex: none; display: flex; align-items: center; border-bottom: 1px solid var(--line); padding: 0 4px 0 2px; }
.logo { width: 20px; height: 19px; }
.logo text { font: bold 12px "Liberation Sans", sans-serif; fill: #ff9a00; }
.home { margin: 2px 16px 0 17px; }
.vsep { width: 1px; height: 26px; background: #444; flex: none; }
.menus { display: flex; gap: 18px; margin: 0 15px 9px 21px; font-size: 16px; font-family: "Noto Sans CJK JP", sans-serif; }
.workspace { gap: 8px; margin-left: 15px; }
.vsep.tight { margin: 0 16px 0 15px; }
.help { display: flex; align-items: center; width: 228px; height: 25px; border: 2px solid #5f5f5f; background: var(--field); margin: 0 12px; padding-left: 3px; color: #d0d0d0; }
.help input { flex: 1; margin-left: 3px; color: #999; }
.help input::placeholder { color: #8c8c8c; opacity: 1; }
.winbtns { display: flex; align-self: flex-start; height: 24px; border: 1px solid var(--edge); border-top: 0; border-radius: 0 0 3px 3px; color: #b8b8b8; }
.winbtns button { width: 34px; }
.winbtns button + button { border-left: 1px solid var(--edge); }

/* control bar */
.control { height: 43px; flex: none; display: flex; align-items: center; padding: 0 20px 0 8px; border-bottom: 1px solid var(--line); }
.state { width: 156px; height: 30px; line-height: 30px; border-right: 1px solid #474747; margin-right: 6px; color: #c4c4c4; }
.combo { display: flex; height: 26px; border: 1px solid var(--edge); background: var(--field); border-radius: 2px; }
.combo input, .combo select { height: 100%; padding-left: 4px; font-size: 16px; }
.caret, .stepper { width: 21px; flex: none; display: flex; align-items: center; justify-content: center; background: var(--bg); }
.caret { background: #484848; border-left: 1px solid #585858; }
.stepper { background: #4a4a4a; border-right: 1px solid #5a5a5a; }
.caret svg { width: 12px; height: 12px; }
.stepper svg { width: 12px; height: 20px; }
.control .combo + .combo { margin-left: 8px; }
.chip { width: 25px; background: #e2e2e2; }
.chip.white { background: #fff; }
.strokechip { background: #000; border: 1px solid #ddd; display: flex; align-items: center; justify-content: center; }
.strokechip i { width: 9px; height: 9px; background: #ccc; border: 1px solid #fff; box-shadow: inset 0 0 0 1px #000; }
.dotted { font-weight: bold; font-size: 14px; line-height: 18px; border-bottom: 2px dotted #a0a0a0; margin: 0 7px 0 15px; white-space: nowrap; }
.brush + .dotted { margin-left: 9px; }
.w52 { width: 52px; } .w53 { width: 53px; } .w54 { width: 54px; } .w62 { width: 62px; } .w63 { width: 63px; } .w72 { width: 72px; } .w40 { width: 40px; }
.w108 { width: 108px; } .w109 { width: 109px; } .w112 { width: 112px; }
.light { display: flex; align-items: center; justify-content: center; gap: 6px; background: #e2e2e2; color: #000; }
.light select { padding: 0; font-size: 15px; }
.rule { height: 4px; background: #000; flex: none; }
.rule.thin { height: 3px; }
.dot { width: 7px; height: 7px; border-radius: 50%; background: #000; margin-right: 5px; }
.style-label { color: #b4b4b4; margin: 0 7px; width: 72px; white-space: nowrap; }
.control > .vsep { margin: 0 6px 0 9px; height: 32px; }
.outlined { height: 25px; border: 1px solid #707070; border-radius: 3px; }
.doc { width: 145px; margin-right: 6px; }
.pref { width: 100px; }
.similar { margin-left: 12px; gap: 6px; }
.faint { color: #6f6f6f; }
.snap { gap: 6px; margin: 0 24px 0 14px; }

/* work area */
.work { flex: 1; min-height: 0; display: flex; }
.bar { height: 16px; flex: none; background: var(--dark); display: flex; align-items: center; border-bottom: 1px solid var(--line); color: #d0d0d0; }
.toolbox { width: 80px; flex: none; border-right: 3px solid #3a3a3a; }
.toolbox .bar { margin-left: -3px; }
.grip { width: 24px; height: 4px; margin: 4px 0 15px 21px; background: repeating-linear-gradient(90deg, #3c3c3c 0 1px, transparent 1px 3px); }
.tools { display: grid; grid-template-columns: 32px 39px; grid-auto-rows: 30px; padding-bottom: 2px; border-bottom: 1px solid #474747; margin-right: 6px; }
.tools svg { width: 23px; height: 23px; fill: #c8c8c8; overflow: visible; }
.tools .ln { fill: none; stroke: #c8c8c8; stroke-width: 1.8; }
.tools button { position: relative; }
.tools .more::after { content: ""; position: absolute; right: 2px; bottom: 3px; border: 2px solid #c8c8c8; border-top-color: transparent; border-left-color: transparent; }
.fillstroke { position: relative; height: 81px; }
.fillstroke span, .fillstroke svg { position: absolute; }
.fillstroke .fill { left: -2px; top: 5px; width: 44px; height: 45px; background: #fff; border: 1px solid #333; }
.fillstroke .stroke { left: 20px; top: 28px; width: 44px; height: 45px; background: linear-gradient(var(--bg), var(--bg)) center / 18px 19px no-repeat #000; border: 1px solid #fff; }
.fillstroke .stroke::after { content: ""; position: absolute; inset: 11px; border: 1px solid #fff; }
.swapicon { left: 52px; top: 7px; color: var(--icon); }
.defaulticon { left: -3px; top: 58px; }
.modes { display: flex; width: 71px; height: 26px; border: 1px solid #5e5e5e; border-left: 0; margin-bottom: 4px; }
.modes button { width: 25px; border-left: 1px solid #5e5e5e; }
.modes button:first-child { width: 20px; border: 0; justify-content: flex-start; }
.modes .on { background: #303030; }
.msw { width: 16px; height: 16px; border: 2px solid #000; background: #fff; }
.msw.grad { background: linear-gradient(90deg, #fff, #444); }
.screen { margin: 9px 0 0 20px; }
.dots { width: 67px; height: 12px; margin-top: 24px; }
.toolbox::after { content: ""; display: block; border-top: 1px solid #333; margin-top: 11px; }

.document { flex: 1; min-width: 0; display: flex; flex-direction: column; }
.doctabs { height: 36px; flex: none; background: var(--dark); display: flex; }
.doctab { display: flex; align-items: center; gap: 18px; padding: 0 8px 2px 14px; background: var(--bg); font-size: 14px; font-family: "Noto Sans CJK JP", sans-serif; border-bottom: 1px solid var(--line); }
.stage { flex: 1; min-height: 0; display: flex; }
.canvas { flex: 1; position: relative; background: #606060; overflow: hidden; }
.bleed { position: absolute; left: 7px; top: 43px; width: 1167px; height: 844px; border: 1px solid #d0201c; }
.artboard { position: absolute; left: 38px; top: 75px; width: 1104px; height: 781px; background: #fff; border: 1px solid #000; }
.vscroll { width: 21px; background: #4b4b4b; display: flex; flex-direction: column; align-items: center; justify-content: space-between; padding: 5px 0; color: #a8a8a8; }
.vscroll i { width: 18px; height: 31px; border-radius: 8px; background: #666; }
.status { height: 20px; flex: none; display: flex; align-items: stretch; padding: 0 0 0 6px; font-size: 15px; line-height: 20px; overflow: hidden; border-top: 1px solid #505050; }
.status input { height: 24px; background: var(--field); padding-left: 4px; }
.status .caret, .nav, .play { height: 24px; }
.nav { width: 53px; }
.nav ~ .nav { width: 48px; }
.tool { width: 257px; text-align: center; font-size: 13px; line-height: 24px; border-left: 1px solid #444; border-right: 1px solid #444; color: #ccc; }
.play { width: 18px; }
.hscroll { flex: 1; background: #4b4b4b; display: flex; align-items: center; justify-content: space-between; padding: 0 26px 0 4px; color: #a8a8a8; }
.hscroll i { width: 32px; height: 17px; border-radius: 8px; background: #666; }

/* floating panels */
.float { position: absolute; background: var(--bg); border: 1px solid #333; box-shadow: 0 2px 4px #4449; color: #c8c8c8; }
.chars { left: 1157px; top: 142px; width: 313px; }
.strokes { left: 1157px; top: 411px; width: 320px; }
.float .bar { justify-content: flex-end; padding-right: 7px; gap: 14px; }
.tabs { display: flex; height: 34px; background: var(--dark); font-family: "Noto Sans CJK JP", sans-serif; font-size: 14px; }
.tab { width: 52px; flex: none; color: #a0a0a0; border-right: 1px solid #3a3a3a; border-bottom: 1px solid #3a3a3a; padding-bottom: 4px; }
.tab.on { background: var(--bg); color: #fff; gap: 6px; border-bottom-color: var(--bg); }
.tab.on svg { color: #b0b0b0; }
.kana { font-size: 12px; }
.burger { margin-left: auto; width: 28px; color: #a8a8a8; border-bottom: 1px solid #3a3a3a; }
.float .tab.on { width: 59px; justify-content: flex-start; padding-left: 7px; }
.float .tab:nth-child(3) { width: 86px; }
hr { border: 0; height: 1px; background: #484848; margin: 0; width: 100%; }
.cbody { padding: 8px 7px 7px; display: flex; flex-direction: column; gap: 7px; }
.cbody .combo, .sbody .combo { color: #fff; }
.cbody .combo { height: 25px; }
.fontbox { flex: 1; display: flex; align-items: center; padding-left: 2px; color: #c0c0c0; }
.combo .fontbox input { flex: 1; color: #fff; font-size: 15px; font-weight: 500; padding-left: 6px; }
.styleselect { flex: 1; }
.cbody .styleselect { padding-left: 7px; font-size: 15px; }
.pairs { display: grid; grid-template-columns: 1fr 135px; row-gap: 7px; }
.field { display: flex; align-items: center; justify-content: space-between; width: 135px; }
.field .combo { width: 108px; }
.field input { flex: 1; }
.fi { width: 23px; height: 21px; fill: var(--icon); overflow: visible; font-family: "Liberation Serif", serif; font-weight: bold; }
.fi.sans { font-family: "Liberation Sans", sans-serif; font-weight: normal; }
.fi .inv { fill: #484848; }
.snaprow { display: flex; align-items: center; height: 26px; gap: 22px; padding-right: 6px; }
.snaprow span { flex: 1; }

.sbody { padding: 7px 7px 10px; display: flex; flex-direction: column; gap: 8px; }
.row { display: flex; align-items: center; height: 26px; }
.row > label { width: 106px; text-align: right; white-space: nowrap; flex: none; }
.row > label.ratio { width: 51px; margin-left: 4px; }
.row .combo { height: 26px; }
.box { width: 53px; height: 26px; background: var(--field); border: 1px solid var(--edge); color: #fff; padding-left: 5px; font-size: 16px; }
.seg { display: flex; height: 26px; border: 1px solid var(--edge); border-radius: 2px; }
.seg button { width: 28px; }
.seg button:first-child { width: 27px; }
.seg button + button { border-left: 1px solid var(--edge); }
.seg svg { width: 16px; height: 16px; fill: var(--icon); }
.seg .on { background: #303030; }
.seg.wide button { width: 48px; }
.seg.wide svg { width: 36px; }
.second { margin-left: 9px; }
.tail { width: 18px; height: 18px; margin-left: 13px; }
.dash { display: flex; justify-content: space-between; align-items: center; }
.dash label { display: flex; align-items: center; gap: 6px; color: #fff; font-weight: bold; }
.dash input { appearance: none; width: 15px; height: 15px; border: 1px solid #c8c8c8; border-radius: 2px; margin-left: 1px; }
.dashes { display: grid; grid-template-columns: repeat(6, 46px); justify-content: space-between; color: #757575; }
.dashes label { display: flex; flex-direction: column; align-items: center; gap: 2px; }
.dashes input { width: 100%; height: 26px; background: #585858; text-align: center; color: #757575; font-size: 16px; }
.dashes + hr { margin-top: 3px; }
.dim, .dim .combo { color: #757575; border-color: #5c5c5c; }
.row.dim .combo { color: #757575; background: #575757; }
.row.dim .stepper { background: #575757; }
.row.dim { margin-top: 3px; }
.row + .row.dim + .row.dim { margin-top: 2px; }

/* dock */
.dock { width: 320px; flex: none; border-left: 2px solid #383838; display: flex; flex-direction: column; color: #c8c8c8; }
.dock > .bar { justify-content: flex-end; padding-right: 9px; }
.dock section { border-bottom: 3px double #333; }
.cut { justify-content: flex-start; overflow: hidden; padding-left: 4px; }
.colour .tab.on { width: 64px; }
.mix { display: flex; padding: 7px 0 0 7px; }
.proxy { width: 54px; }
.minis { display: flex; gap: 10px; color: var(--icon); }
.pair { position: relative; height: 40px; margin-top: 6px; }
.pair span { position: absolute; }
.pair .fill { left: 0; top: 0; width: 25px; height: 25px; background: #fff; border: 1px solid #333; }
.pair .stroke { left: 12px; top: 13px; width: 25px; height: 25px; background: #000; border: 1px solid #fff; }
.pair .stroke::after { content: ""; position: absolute; inset: 6px; border: 1px solid #fff; background: var(--bg); }
.sliders { flex: 1; display: grid; gap: 6px; padding-right: 30px; margin-top: 2px; font-size: 16px; }
.ch { display: flex; align-items: center; height: 25px; }
.ch label { width: 22px; padding-right: 4px; text-align: center; }
.ch input[type=range] { appearance: none; width: 138px; height: 19px; }
.ch input[type=range]::-webkit-slider-runnable-track { height: 5px; margin-top: -8px; background: linear-gradient(90deg, #fff, var(--ink)) center / calc(100% - 12px) 5px no-repeat; }
.ch input[type=range]::-webkit-slider-thumb { appearance: none; width: 12px; height: 11px; margin-top: 5px; background: var(--icon); clip-path: polygon(50% 0, 100% 50%, 100% 100%, 0 100%, 0 50%); }
.c { --ink: #00a0e9; } .m { --ink: #d6007f; } .y { --ink: #ffee00; } .k { --ink: #231815; }
.ch input:not([type=range]) { width: 44px; height: 25px; margin: 0 4px 0 5px; border: 2px solid #5f5f5f; background: var(--field); color: #fff; padding-left: 4px; }
.quick { margin: 14px 0 13px 7px; }
.spectrum { height: 157px; margin: 0 21px 8px 8px; border: 1px solid #333;
  background: linear-gradient(#fff, #fff0 55%, #0000 58%, #000 97%), linear-gradient(90deg, #e8121c, #ef7a10 8%, #f8ee28 17%, #86c024 26%, #48b028 35%, #30b89a 48%, #16b0e8 54%, #1c50a4 64%, #0c3090 68%, #6c2c94 76%, #b01890 84%, #ee1878 91%, #e8121c); }
.path .tab.on { width: 111px; }
.pbody { padding: 8px 7px 13px; }
h3 { margin: 0; font-weight: normal; font-size: 15px; line-height: 22px; }
.shapes { display: grid; grid-template-columns: repeat(4, 42px) 110px; margin: 12px 0 12px -4px; align-items: center; }
.shapes svg, .finders svg { width: 20px; height: 20px; fill: var(--icon); }
.expand { background: #585858; color: #757575; height: 25px; margin-left: 5px; }
.finders { display: grid; grid-template-columns: repeat(6, 47px); margin: 14px 0 0 -5px; }
.layers { flex: 1; min-height: 0; display: flex; flex-direction: column; }
.dock .layers { border-bottom: 0; }
.layers .tab.on { width: 70px; }
.layers .tabs { flex: none; }
.list { flex: 1; margin: 7px 7px 0; border: 1px solid #5e5e5e; }
.layer { height: 27px; display: flex; align-items: stretch; background: #4f657c; position: relative; color: #e8e8e8; }
.eye { width: 26px; }
.lock { width: 27px; border: solid #465b70; border-width: 0 1px; }
.tint { width: 4px; margin: 2px 0; background: #4f80ff; }
.thumb { width: 22px; height: 22px; margin: 2px 7px 0 33px; background: #fff; border: 1px solid #000; }
.name { flex: 1; line-height: 26px; }
.target { width: 27px; margin-right: 18px; border-left: 1px solid #465b70; }
.corner { position: absolute; right: 0; top: 0; border: 4px solid #ddd; border-left-color: transparent; border-bottom-color: transparent; }
footer { height: 26px; flex: none; display: flex; align-items: center; padding: 0 26px 0 7px; }
.count { flex: 1; }
footer button { width: 33px; color: #d0d0d0; }
footer svg { width: 16px; height: 16px; }
footer svg.wide { width: 20px; }
.off { color: #757575; }
footer .off { color: #757575; }
```
